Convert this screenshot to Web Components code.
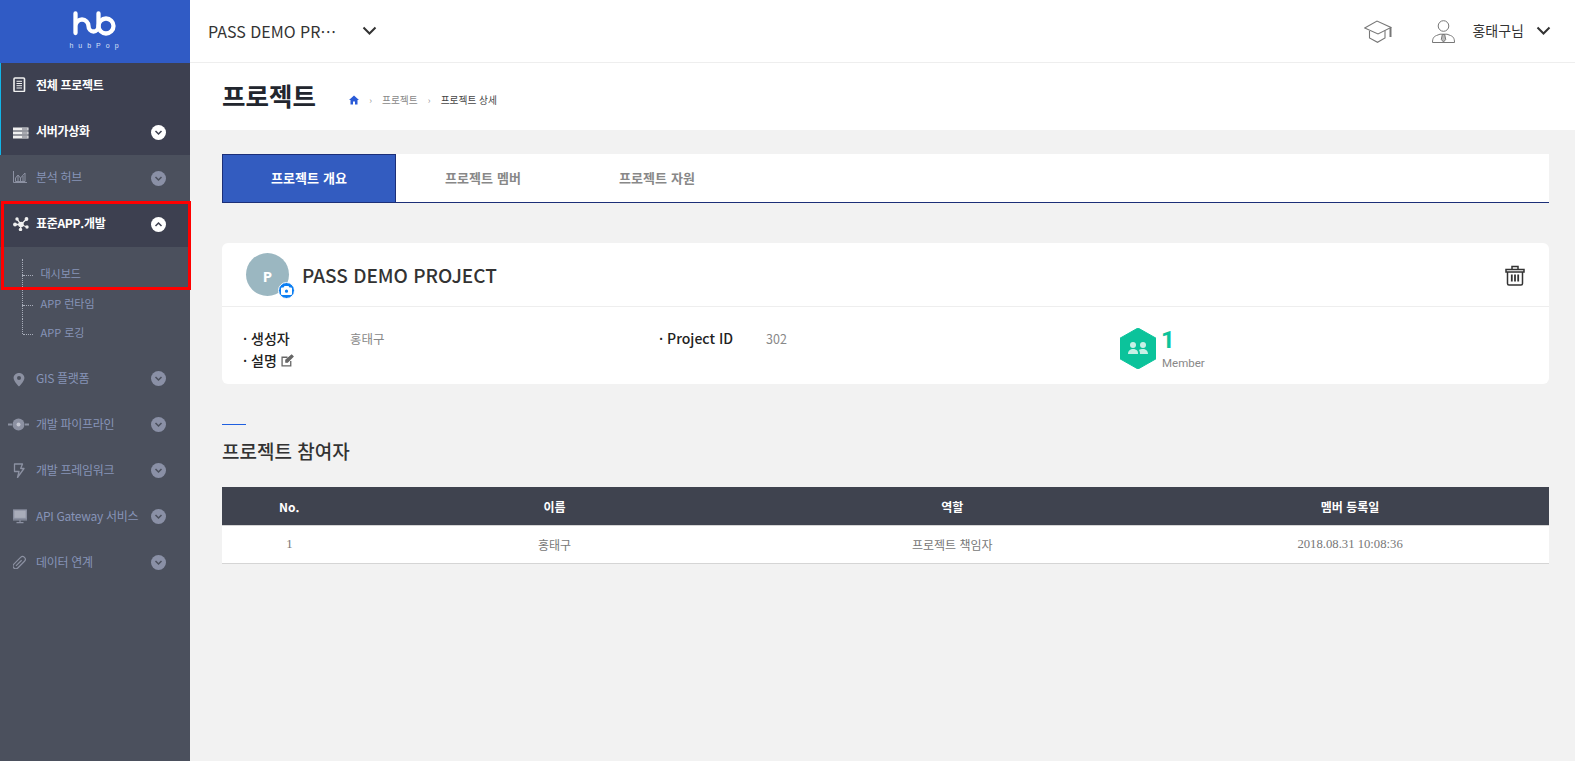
<!DOCTYPE html>
<html lang="ko">
<head>
<meta charset="utf-8">
<title>hubPop</title>
<style>
  html, body { margin: 0; height: 100%; }
  body {
    font-family: "Noto Sans CJK KR", "Noto Sans", sans-serif;
    background: #f2f2f2;
    overflow: hidden;
  }
</style>
</head>
<body>
<hub-app>
  <hub-sidebar slot="side">
    <hub-nav-item icon="doc" label="전체 프로젝트" state="active" nochevron></hub-nav-item>
    <hub-nav-item icon="server" label="서버가상화" state="active"></hub-nav-item>
    <hub-nav-item icon="chart" label="분석 허브"></hub-nav-item>
    <hub-nav-item icon="nodes" label="표준APP.개발" state="open">
      <hub-sub-item>대시보드</hub-sub-item>
      <hub-sub-item>APP 런타임</hub-sub-item>
      <hub-sub-item>APP 로깅</hub-sub-item>
    </hub-nav-item>
    <hub-nav-item icon="pin" label="GIS 플랫폼"></hub-nav-item>
    <hub-nav-item icon="pipe" label="개발 파이프라인"></hub-nav-item>
    <hub-nav-item icon="bolt" label="개발 프레임워크"></hub-nav-item>
    <hub-nav-item icon="monitor" label="API Gateway 서비스"></hub-nav-item>
    <hub-nav-item icon="link" label="데이터 연계"></hub-nav-item>
  </hub-sidebar>
  <hub-topbar slot="top" project="PASS DEMO PR⋯" user="홍태구님"></hub-topbar>
  <hub-page-head title-text="프로젝트"></hub-page-head>
  <hub-tabs></hub-tabs>
  <hub-project-card></hub-project-card>
  <hub-section-title>프로젝트 참여자</hub-section-title>
  <hub-member-table></hub-member-table>
</hub-app>

<script>
// Sidebar icons, each drawn in a 15 tall box
const ICONS = {
  doc: `<rect x="1" y="1" width="10.500" height="13.500" rx="1" fill="none" stroke="currentColor" stroke-width="1.600"/><path d="M3.500 4.300h5.500M3.500 6.500h5.500M3.500 8.700h5.500M3.500 11h5.500" stroke="currentColor"/>`,
  server: `<path d="M0 2.500h15.500v3H0zM0 6.500h15.500v3H0zM0 10.500h15.500v3H0z" fill="currentColor"/><path d="M9 4h5.500M9 8h5.500M9 12h5.500" stroke="#3d4050" stroke-width=".8"/>`,
  chart: `<path d="M.5 1v11.500H14" fill="none" stroke="currentColor"/><path d="M2.500 11.500V8l2.500-3 2.500 3L12 3v8.500z" fill="none" stroke="currentColor"/><path d="M5 12V6M7.500 12V8M10 12V6" stroke="currentColor"/>`,
  nodes: `<path d="M2 8.500h6M8 8.500 13.500 3M4 3l4 5.500 6 2.500M8 8.500 7.500 13.500" stroke="currentColor" stroke-width="1.300"/><g fill="currentColor"><circle cx="8" cy="8.500" r="2.800"/><circle cx="2" cy="8.500" r="1.900"/><circle cx="13.500" cy="3" r="1.900"/><circle cx="4" cy="3" r="1.700"/><circle cx="14" cy="11" r="1.700"/><circle cx="7.500" cy="13.500" r="1.700"/></g>`,
  pin: `<path fill-rule="evenodd" d="M6 1C3 1 .6 3.200.6 6c0 3.400 5.400 8.500 5.400 8.500S11.400 9.400 11.400 6C11.400 3.200 9 1 6 1zm0 7a2 2 0 1 1 0-4 2 2 0 0 1 0 4z" fill="currentColor"/>`,
  pipe: `<path d="M0 7.500h4M17 7.500h4" stroke="currentColor" stroke-width="1.800"/><circle cx="10.500" cy="7.500" r="6" fill="currentColor"/><circle cx="10.500" cy="7.500" r="2" fill="#c4c7d2"/>`,
  bolt: `<path d="M1.500 1h8L7.700 5.500H11L4.500 14.500 6 8.500H1.500z" fill="none" stroke="currentColor" stroke-width="1.300" stroke-linejoin="round"/>`,
  monitor: `<rect x=".7" y="1" width="12.600" height="8.500" fill="#a9adba" stroke="currentColor" stroke-width="1.300"/><path d="M0 10.800h14M7 11v2.500M3.500 13.700h7" stroke="currentColor" stroke-width="1.200" fill="none"/>`,
  link: `<g transform="rotate(-45 6 8.500)" fill="none" stroke="currentColor" stroke-width="1.200"><rect x="-1.500" y="6" width="15" height="5.500" rx="2.750"/><path d="M1.500 8.750h8"/></g>`
};
const ICON_DY = { server: 1.5, chart: 1, nodes: 1, pin: 2, pipe: 1.5, bolt: 1, monitor: 1, link: 0 };

class HubApp extends HTMLElement {
  constructor() {
    super();
    this.attachShadow({ mode: "open" });
    this.shadowRoot.innerHTML = `
      <style>
        :host { display: grid; grid-template-columns: 190px 1fr; grid-template-rows: 63px 1fr; height: 761px; }
        .side { grid-row: 1 / 3; display: flex; min-height: 0; }
        .main { display: flex; flex-direction: column; min-width: 0; }
      </style>
      <div class="side"><slot name="side"></slot></div>
      <slot name="top"></slot>
      <div class="main"><slot></slot></div>`;
  }
}

class HubSidebar extends HTMLElement {
  constructor() {
    super();
    this.attachShadow({ mode: "open" });
    this.shadowRoot.innerHTML = `
      <style>
        :host { display: block; width: 190px; background: #4b505d; position: relative; }
        .logo { height: 63px; background: #305bc5; display: flex; flex-direction: column; align-items: center; color: #fff; }
        .logo svg { display: block; margin: 10px 0 0 -3px; }
        .logo span { font: 400 7px/8px "Liberation Sans", sans-serif; letter-spacing: 5px; margin: 6px 0 0 3px; color: #d9e2f7; white-space: nowrap; }
        .mark { position: absolute; left: 1px; top: 201px; width: 190px; height: 89px; box-sizing: border-box; border: 3px solid #f00; }
      </style>
      <div class="logo">
        <svg width="44" height="26" viewBox="0 0 44 26" fill="none" stroke="#fff" stroke-width="4.300" stroke-linecap="round">
          <path d="M3.500 3.500V23M3.500 16a6.500 6.500 0 0 1 13 0a5 5.500 0 0 0 10 0V3.500"/>
          <circle cx="34" cy="16" r="7.500"/>
        </svg>
        <span>hubPop</span>
      </div>
      <slot></slot>
      <div class="mark"></div>`;
  }
}

class HubNavItem extends HTMLElement {
  constructor() {
    super();
    this.attachShadow({ mode: "open" });
  }
  connectedCallback() {
    const state = this.getAttribute("state") || "";
    const icon = this.getAttribute("icon");
    const wide = icon === "pipe";
    const up = state === "open";
    this.shadowRoot.innerHTML = `
      <style>
        :host { display: block; color: #8794b8; }
        .row { height: 46px; display: flex; align-items: center; box-sizing: border-box; font-size: 12px; letter-spacing: -.3px; position: relative; }
        .ico { position: absolute; left: ${wide ? 8 : 13}px; top: ${14 + (ICON_DY[icon] || 0)}px; width: ${wide ? 21 : 16}px; height: 15px; color: #8c91a2; }
        .lbl { margin-left: 36px; margin-top: -3px; flex: 1; white-space: nowrap; }
        .chev { width: 15px; height: 15px; border-radius: 50%; background: #8a90a6; margin-right: 24px; display: flex; align-items: center; justify-content: center; color: #4b505d; }
        :host([state]) .row { background: #3d4050; color: #fff; font-weight: 700; }
        :host([state]) .ico { color: #f0f0f0; }
        :host([state]) .chev { background: #fff; color: #3d4050; }
        :host([state="active"]) .row { border-left: 1px solid #12b5e8; }
        :host([state="active"]) .ico { left: 12px; }
        :host([state="active"]) .lbl { margin-left: 35px; }
        .sub { padding: 12px 0 8px; position: relative; }
      </style>
      <div class="row">
        <svg class="ico" viewBox="0 0 ${wide ? 21 : 16} 15">${ICONS[icon]}</svg>
        <span class="lbl">${this.getAttribute("label")}</span>
        ${this.hasAttribute("nochevron") ? "" : `<span class="chev"><svg width="9" height="9" viewBox="0 0 9 9" fill="none" stroke="currentColor" stroke-width="1.500"><path d="${up ? "M1.500 6 4.500 3l3 3" : "M1.500 3 4.500 6l3-3"}"/></svg></span>`}
      </div>
      ${up ? `<div class="sub"><slot></slot></div>` : ""}`;
  }
}

class HubSubItem extends HTMLElement {
  constructor() {
    super();
    this.attachShadow({ mode: "open" });
    this.shadowRoot.innerHTML = `
      <style>
        :host { display: block; height: 29.500px; color: #8794b8; font-size: 11px; line-height: 29.500px; padding-left: 40.500px; position: relative; white-space: nowrap; }
        :host::before { content: ""; position: absolute; left: 22px; top: 0; height: 16px; border-left: 1px dotted #a8adba; }
        :host::after { content: ""; position: absolute; left: 23px; top: 16px; width: 10px; border-top: 1px dotted #a8adba; }
        .fill { position: absolute; left: 22px; top: 16px; height: 14px; border-left: 1px dotted #a8adba; }
        :host(:last-child) .fill { display: none; }
      </style>
      <span class="fill"></span><slot></slot>`;
  }
}

class HubTopbar extends HTMLElement {
  constructor() {
    super();
    this.attachShadow({ mode: "open" });
    this.shadowRoot.innerHTML = `
      <style>
        :host { display: flex; align-items: center; height: 63px; box-sizing: border-box; background: #fff; border-bottom: 1px solid #eee; color: #333; }
        .name { margin-left: 18px; width: 154px; font-size: 16px; white-space: nowrap; margin-top: -1px; }
        .chev { display: block; }
        .push { flex: 1; }
        .user { font-size: 14px; margin: -2px 12px 0 17px; }
        .cap { margin-right: 40px; }
        .end { margin-right: 24px; }
      </style>
      <span class="name">${this.getAttribute("project")}</span>
      <svg class="chev" width="15" height="10" viewBox="0 0 15 10" fill="none" stroke="#333" stroke-width="2"><path d="M1.500 1.500 7.500 7.500l6-6"/></svg>
      <span class="push"></span>
      <svg class="cap" width="28" height="23" viewBox="0 0 28 23" fill="none" stroke="#777" stroke-width="1.100">
        <path d="M.7 8 13 1l14 6.500L14 14z"/><path d="M5.500 11v7l8 4.300 7.500-4.300v-7.500"/><path d="M26.500 8v9" stroke-width="2"/>
      </svg>
      <svg width="23" height="23" viewBox="0 0 23 23" fill="none" stroke="#777" stroke-width="1">
        <circle cx="11.500" cy="6" r="5.300"/><path d="M.5 22.500c0-4.500 1.500-6 4-7l3.500-1.300h7l3.500 1.300c2.500 1 4 2.500 4 7z"/><path d="M10.300 14.500h2.400l1 5-2.200 2.500-2.200-2.500z" fill="#bbb"/>
      </svg>
      <span class="user">${this.getAttribute("user")}</span>
      <svg class="chev end" width="15" height="10" viewBox="0 0 15 10" fill="none" stroke="#333" stroke-width="2"><path d="M1.500 1.500 7.500 7.500l6-6"/></svg>`;
  }
}

class HubPageHead extends HTMLElement {
  constructor() {
    super();
    this.attachShadow({ mode: "open" });
    this.shadowRoot.innerHTML = `
      <style>
        :host { display: flex; align-items: center; height: 67px; background: #fff; padding-left: 32px; color: #22262e; }
        h1 { margin: -4px 0 0; font-size: 25.500px; font-weight: 700; width: 127px; white-space: nowrap; }
        nav { display: flex; align-items: center; font-size: 9.700px; color: #888; margin-top: 7px; }
        .sep { color: #999; font-size: 9px; width: 23px; text-align: center; }
        .cur { color: #444; }
      </style>
      <h1>${this.getAttribute("title-text")}</h1>
      <nav>
        <svg width="10" height="10" viewBox="0 0 10 10" fill="#2a5bd7"><path d="M5 .5 0 5h1.500v4.500h2.500V6.500h2v3h2.500V5H10z"/></svg>
        <span class="sep">›</span><span>프로젝트</span><span class="sep">›</span><span class="cur">프로젝트 상세</span>
      </nav>`;
  }
}

class HubTabs extends HTMLElement {
  constructor() {
    super();
    this.attachShadow({ mode: "open" });
    const names = ["프로젝트 개요", "프로젝트 멤버", "프로젝트 자원"];
    this.shadowRoot.innerHTML = `
      <style>
        :host { display: flex; height: 49px; margin: 24px 26px 0 32px; background: #fff; border-bottom: 1px solid #1c2f78; box-sizing: border-box; }
        div { width: 174px; box-sizing: border-box; display: flex; align-items: center; justify-content: center; font-size: 13px; letter-spacing: .1px; font-weight: 700; color: #888; padding-bottom: 2px; }
        .on { background: #335cc0; color: #fff; border: 1px solid #1c2f78; border-bottom: 0; }
      </style>
      ${names.map((n, i) => `<div class="${i === 0 ? "on" : ""}">${n}</div>`).join("")}`;
  }
}

class HubProjectCard extends HTMLElement {
  constructor() {
    super();
    this.attachShadow({ mode: "open" });
    this.shadowRoot.innerHTML = `
      <style>
        :host { display: block; margin: 40px 26px 0 32px; height: 141px; background: #fff; border-radius: 6px; color: #333; }
        .head { height: 64px; box-sizing: border-box; border-bottom: 1px solid #eee; display: flex; align-items: center; padding: 0 24px; }
        .avatar { width: 43px; height: 43px; border-radius: 50%; background: #9bb7c1; color: #fff; font: 700 15px/47px "Noto Sans", sans-serif; text-align: center; position: relative; flex: none; }
        .badge { position: absolute; left: 32px; top: 29px; width: 17px; height: 17px; border-radius: 50%; background: #0d7ff2; border: 1px solid #fff; box-sizing: border-box; display: flex; align-items: center; justify-content: center; }
        h2 { flex: 1; margin: 1px 0 0 13px; font: 500 19px/1.200 "Noto Sans CJK KR", sans-serif; color: #333; }
        .body { display: grid; grid-template-columns: 416px 458px 1fr; padding: 20px 0 0 21px; }
        .row { display: flex; align-items: center; height: 22px; font-size: 14px; font-weight: 500; white-space: nowrap; color: #222; }
        .k { width: 107px; }
        .pid { width: 107px; }
        .v { font-size: 12.500px; font-weight: 400; color: #888; }
        .mem { display: flex; margin-top: 1px; margin-left: 3px; font-family: Roboto, sans-serif; }
        .mem b { display: block; font-size: 24px; line-height: 24px; font-weight: 700; color: #0bc39b; }
        .mem small { display: block; font-size: 11.500px; color: #888; line-height: 14px; margin: 4px 0 0 1px; }
        .mem svg { margin-right: 5px; }
        .edit { margin-left: 4px; }
      </style>
      <div class="head">
        <div class="avatar">P
          <span class="badge"><svg width="11" height="9" viewBox="0 0 11 9" fill="#fff"><path fill-rule="evenodd" d="M3.500 0h4l1 1.500H10a1 1 0 0 1 1 1V8a1 1 0 0 1-1 1H1a1 1 0 0 1-1-1V2.500a1 1 0 0 1 1-1h1.500zM5.500 6.800a1.600 1.600 0 1 0 0-3.200 1.600 1.600 0 0 0 0 3.200z"/></svg></span>
        </div>
        <h2>PASS DEMO PROJECT</h2>
        <svg width="20" height="22" viewBox="0 0 20 22" fill="none" stroke="#333" stroke-width="1.500">
          <path d="M1 5.500h18v2.500H1zM7 5.500V2.500h6v3M2.500 8v11.500a1.500 1.500 0 0 0 1.500 1.500h12a1.500 1.500 0 0 0 1.500-1.500V8"/>
          <path d="M6.800 10.500v7M10 10.500v7M13.200 10.500v7" stroke-width="1.800"/>
        </svg>
      </div>
      <div class="body">
        <div>
          <div class="row"><span class="k">· 생성자</span><span class="v">홍태구</span></div>
          <div class="row">· 설명<svg class="edit" width="13" height="13" viewBox="0 0 12 12" fill="none" stroke="#666" stroke-width="1.200"><path d="M9 6.500V11H1V3h5"/><path d="M4.500 5.500 9.800 1l1.300 1.300L6 7.500H4.500z" fill="#666"/></svg></div>
        </div>
        <div class="row"><span class="pid">· Project ID</span><span class="v">302</span></div>
        <div class="mem">
          <svg width="36" height="41" viewBox="0 0 36 41">
            <path d="M18 0 36 10.200v20.600L18 41 0 30.800V10.200z" fill="#0bc39b" stroke="#0bc39b" stroke-linejoin="round"/>
            <g fill="#c8f0e6"><circle cx="13" cy="17" r="3"/><circle cx="23" cy="17" r="3"/><path d="M8 26c0-3.500 2.500-5 5-5 1.800 0 3.300.6 4.300 1.800.7.800.7 2 .7 3.200zM20 26c0-2-.3-3-1-4 1-.7 2.500-1 4-1 2.500 0 5 1.500 5 5z"/></g>
          </svg>
          <div><b>1</b><small>Member</small></div>
        </div>
      </div>`;
  }
}

class HubSectionTitle extends HTMLElement {
  constructor() {
    super();
    this.attachShadow({ mode: "open" });
    this.shadowRoot.innerHTML = `
      <style>
        :host { display: block; margin: 40px 26px 0 32px; color: #333; font-size: 19px; font-weight: 500; line-height: 28px; }
        i { display: block; width: 24px; height: 1px; background: #1f5fe0; margin-bottom: 12px; }
      </style>
      <i></i><slot></slot>`;
  }
}

class HubMemberTable extends HTMLElement {
  constructor() {
    super();
    this.attachShadow({ mode: "open" });
    const heads = ["No.", "이름", "역할", "멤버 등록일"];
    const cells = ["1", "홍태구", "프로젝트 책임자", "2018.08.31 10:08:36"];
    const row = (list) => list.map((t) => `<div class="${/^\d/.test(t) ? "num" : ""}">${t}</div>`).join("");
    this.shadowRoot.innerHTML = `
      <style>
        :host { display: block; margin: 22px 26px 0 32px; font-size: 12px; }
        .grid { display: grid; grid-template-columns: 10% 30% 30% 30%; align-items: center; text-align: center; padding-left: 1px; }
        .h { background: #3f434f; color: #fff; font-weight: 700; border-bottom: 1px solid #d5d5d5; height: 38px; }
        .b { background: #fff; color: #777; border-bottom: 1px solid #d5d5d5; box-sizing: border-box; height: 38px; }
        .num { font-family: "Liberation Serif", serif; font-size: 12.700px; }
      </style>
      <div class="grid h">${row(heads)}</div>
      <div class="grid b">${row(cells)}</div>`;
  }
}

customElements.define("hub-app", HubApp);
customElements.define("hub-sidebar", HubSidebar);
customElements.define("hub-nav-item", HubNavItem);
customElements.define("hub-sub-item", HubSubItem);
customElements.define("hub-topbar", HubTopbar);
customElements.define("hub-page-head", HubPageHead);
customElements.define("hub-tabs", HubTabs);
customElements.define("hub-project-card", HubProjectCard);
customElements.define("hub-section-title", HubSectionTitle);
customElements.define("hub-member-table", HubMemberTable);
</script>
</body>
</html>
